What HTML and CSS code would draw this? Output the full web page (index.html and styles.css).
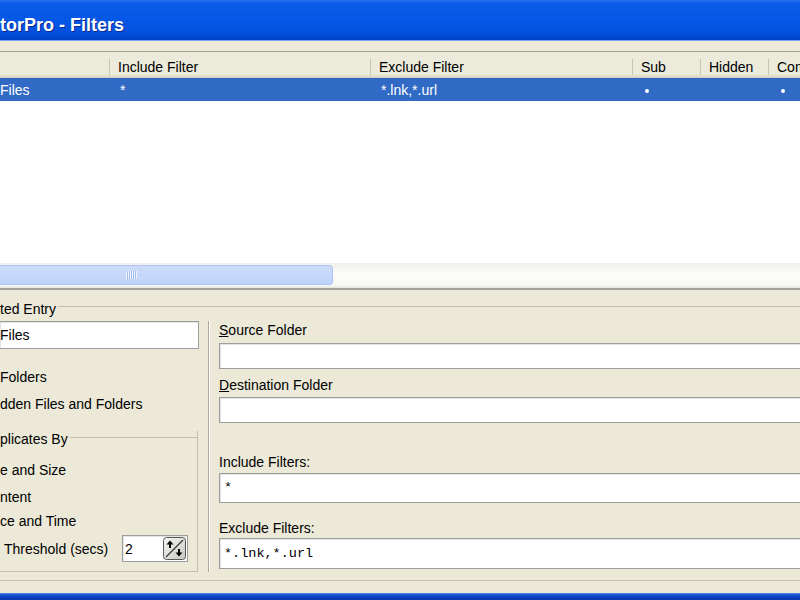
FILE: index.html
```html
<!DOCTYPE html>
<html lang="en">
<head>
  <meta charset="UTF-8" />
  <title>Filters</title>
  <link rel="stylesheet" href="styles.css">
</head>
<body>
  <div class="titlebar"><span class="title">torPro - Filters</span></div>

  <div class="list">
    <div class="list-head">
      <div class="col c-name"></div>
      <div class="col c-inc">Include Filter</div>
      <div class="col c-exc">Exclude Filter</div>
      <div class="col c-sub">Sub</div>
      <div class="col c-hid">Hidden</div>
      <div class="col c-con">Com</div>
    </div>
    <div class="list-row selected">
      <div class="col c-name">Files</div>
      <div class="col c-inc">*</div>
      <div class="col c-exc">*.lnk,*.url</div>
      <div class="col c-sub"><span class="dot"></span></div>
      <div class="col c-hid"></div>
      <div class="col c-con"><span class="dot"></span></div>
    </div>
    <div class="list-body"></div>
    <div class="hscroll">
      <div class="thumb"><span class="grip"></span></div>
    </div>
  </div>

  <div class="group entry">
    <div class="group-title"><span>ted Entry</span></div>
    <div class="entry-body">
      <div class="entry-left">
        <div class="field name-input">Files</div>
        <div class="check first">Folders</div>
        <div class="check second">dden Files and Folders</div>

        <div class="group dup-group">
          <div class="group-title small"><span>plicates By</span></div>
          <div class="opt o1">e and Size</div>
          <div class="opt o2">ntent</div>
          <div class="opt o3">ce and Time</div>
          <div class="threshold">
            <span class="thr-label">Threshold (secs)</span>
            <div class="field spin">
              <span>2</span>
              <svg class="spin-btn" width="23" height="23" viewBox="0 0 23 23">
                <defs>
                  <linearGradient id="sg" x1="0" y1="0" x2="1" y2="1">
                    <stop offset="0" stop-color="#f4f4f2"/>
                    <stop offset="1" stop-color="#c9c9c4"/>
                  </linearGradient>
                </defs>
                <rect x="0.5" y="0.5" width="22" height="22" rx="3" fill="url(#sg)" stroke="#55585c"/>
                <line x1="3" y1="20" x2="20" y2="3" stroke="#3c3c3c" stroke-width="1.2"/>
                <path d="M7 3.5 L10.5 7.5 L8 7.5 L8 11 L6 11 L6 7.5 L3.5 7.5 Z" fill="#000"/>
                <path d="M16 19.5 L12.5 15.5 L15 15.5 L15 12 L17 12 L17 15.5 L19.5 15.5 Z" fill="#000"/>
              </svg>
            </div>
          </div>
        </div>
      </div>

      <div class="vsep"></div>

      <div class="entry-right">
        <div class="label l-src"><u>S</u>ource Folder</div>
        <div class="field in-src"></div>
        <div class="label l-dst"><u>D</u>estination Folder</div>
        <div class="field in-dst"></div>
        <div class="label l-inc">Include Filters:</div>
        <div class="field mono in-inc">*</div>
        <div class="label l-exc">Exclude Filters:</div>
        <div class="field mono in-exc">*.lnk,*.url</div>
      </div>
    </div>
  </div>

  <div class="frame-bottom"></div>
</body>
</html>
```

FILE: styles.css
```css
body {
  margin: 0;
  width: 800px;
  height: 600px;
  overflow: hidden;
  background: #ece9d8;
  font-family: "Liberation Sans", Arial, sans-serif;
  font-size: 14px;
  color: #000;
}

/* title bar */
.titlebar {
  height: 41px;
  box-sizing: border-box;
  padding-top: 14px;
  border-bottom: 1px solid #7ea6f2;
  background: linear-gradient(#2a72f0 0, #0a5ce8 3px, #0657e6 50%, #044fdb 85%, #0242c4 100%);
}

.title {
  display: block;
  font-size: 18px;
  font-weight: bold;
  line-height: 22px;
  color: #fff;
  white-space: nowrap;
  text-shadow: 1px 1px #0b2a90;
}

/* list view */
.list {
  margin-top: 10px;
  border-top: 1px solid #a5a49b;
  border-bottom: 2px solid #a3a29a;
}

.list-head {
  display: flex;
  height: 26px;
  box-sizing: border-box;
  padding-top: 7px;
  background: #ebeadb;
  border-bottom: 1px solid #d0ccbc;
  box-shadow: inset 0 -2px #e2decd;
}

.col {
  flex-shrink: 0;
  box-sizing: border-box;
  height: 16px;
  line-height: 16px;
  white-space: nowrap;
  overflow: hidden;
}

.list-head .col {
  border-left: 1px solid #c7c5b2;
  padding-left: 8px;
}

.list-head .c-name { border-left: 0; }

.c-name { width: 109px; }
.c-inc { width: 261px; }
.c-exc { width: 262px; }
.c-sub { width: 68px; }
.c-hid { width: 68px; }
.c-con { width: 100px; }

.list-row {
  display: flex;
  height: 23px;
  box-sizing: border-box;
  padding-top: 4px;
}

.list-row.selected {
  background: #316ac5;
  color: #fff;
}

.list-row .col {
  border-left: 1px solid transparent;
  padding-left: 10px;
}

.list-row .c-name {
  border-left: 0;
  padding-left: 0;
}

.dot {
  display: block;
  width: 4px;
  height: 4px;
  margin: 7px 0 0 2px;
  border-radius: 50%;
  background: #fff;
}

.list-row .c-sub,
.list-row .c-con {
  padding-left: 0;
  padding-left: 10px;
}

.list-body {
  height: 162px;
  background: #fff;
}

.hscroll {
  height: 25px;
  box-sizing: border-box;
  padding-top: 2px;
  background: linear-gradient(#f1f0ea, #fdfdfb 45%, #f6f6f2 90%, #e4e4e0);
}

.thumb {
  width: 404px;
  height: 20px;
  margin-left: -71px;
  box-sizing: border-box;
  display: flex;
  align-items: center;
  justify-content: center;
  background: linear-gradient(#cddcfb, #bfd2f9);
  border: 1px solid #aec4f2;
  border-radius: 3px;
}

.grip {
  width: 11px;
  height: 8px;
  background: repeating-linear-gradient(90deg, #f2f5fe 0 1px, #a3bcef 1px 2px);
}

/* group boxes */
.group-title {
  display: flex;
  height: 16px;
  line-height: 16px;
  white-space: nowrap;
}

.group-title::after {
  content: "";
  flex: 1;
  height: 0;
  margin: 5px 0 0 2px;
  border-top: 1px solid #c3c0b0;
}

.entry {
  margin-top: 11px;
  padding-bottom: 8px;
  border-bottom: 1px solid #c3c0b0;
}

.entry-body {
  display: flex;
}

.entry-left {
  width: 199px;
  flex-shrink: 0;
}

.field {
  box-sizing: border-box;
  background: #fff;
  border: 1px solid #9c9e9e;
  box-shadow: inset 1px 1px #e4e4e2;
  white-space: nowrap;
}

.name-input {
  margin-top: 4px;
  height: 28px;
  line-height: 26px;
  border-left: 0;
}

.check { line-height: 16px; }
.check.first { margin-top: 20px; }
.check.second { margin-top: 11px; }

.dup-group {
  margin-top: 19px;
  width: 198px;
  box-sizing: border-box;
  padding-bottom: 9px;
  border-right: 1px solid #c3c0b0;
  border-bottom: 1px solid #c3c0b0;
}

.dup-group .group-title::after { margin-top: 6px; }

.opt { line-height: 16px; }
.opt.o1 { margin-top: 15px; }
.opt.o2 { margin-top: 11px; }
.opt.o3 { margin-top: 8px; }

.threshold {
  display: flex;
  align-items: center;
  margin-top: 6px;
  padding-left: 4px;
}

.thr-label { width: 118px; }

.spin {
  display: flex;
  align-items: center;
  width: 66px;
  height: 27px;
  padding-left: 2px;
}

.spin-btn {
  margin-left: auto;
  margin-right: 1px;
}

.vsep {
  width: 0;
  margin: 4px 9px 0 9px;
  border-left: 1px solid #aca899;
  border-right: 1px solid #fff;
}

.entry-right {
  width: 600px;
  flex-shrink: 0;
}

.label { line-height: 16px; }
.l-src { margin-top: 5px; }
.l-dst { margin-top: 8px; }
.l-inc { margin-top: 31px; }
.l-exc { margin-top: 17px; }

.in-src { margin-top: 5px; height: 26px; }
.in-dst { margin-top: 4px; height: 26px; }
.in-inc { margin-top: 3px; height: 30px; line-height: 28px; }
.in-exc { margin-top: 2px; height: 31px; line-height: 29px; }

.mono {
  font-family: "Liberation Mono", "Courier New", monospace;
  font-size: 13.5px;
  padding-left: 4px;
}

.frame-bottom {
  margin-top: 12px;
  height: 12px;
  background: linear-gradient(#6b9cf2 0, #2a5fd6 1px, #0b3fc0 4px, #0a2f9e 100%);
}
```
